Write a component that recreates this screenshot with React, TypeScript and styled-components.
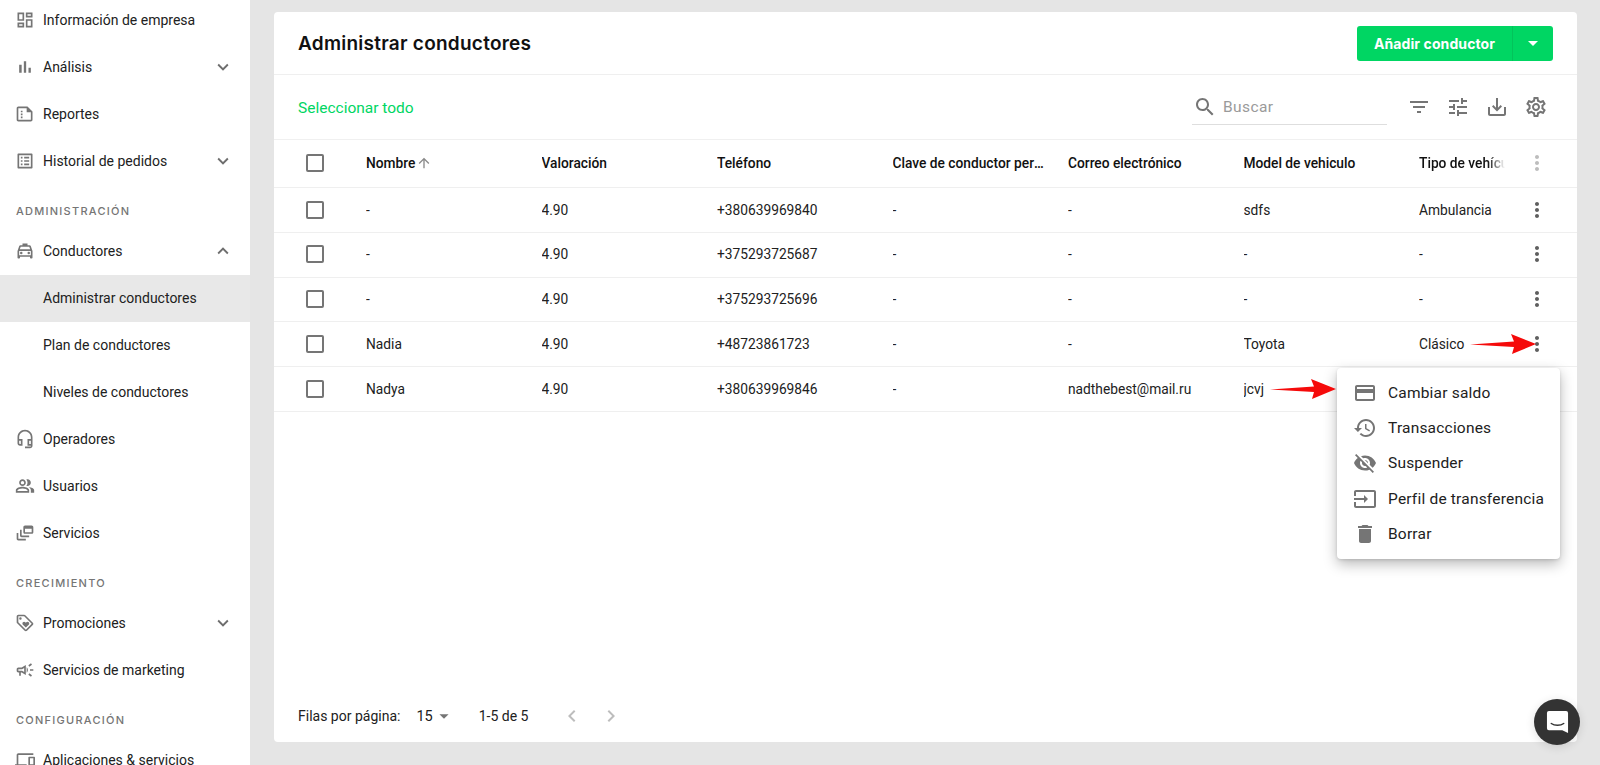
import React from "react";
import styled, { createGlobalStyle } from "styled-components";

const Global = createGlobalStyle`
  html, body { margin: 0; padding: 0; height: 100%; overflow: hidden; background: #e5e5e5; }
  body { font-family: Roboto, "Liberation Sans", sans-serif; color: #212121; -webkit-font-smoothing: antialiased; }
  * { box-sizing: border-box; }
`;

const P = {
  dashboard: "M19 5v2h-4V5h4M9 5v6H5V5h4m10 8v6h-4v-6h4M9 17v2H5v-2h4M21 3h-8v6h8V3zM11 3H3v10h8V3zm10 8h-8v10h8V11zM11 15H3v6h8v-6z",
  bar: "M5 9.2h3V19H5zM10.6 5h2.8v14h-2.8zm5.6 8H19v6h-2.8z",
  note: "M4 3h11l6 6v10c0 1.1-.9 2-2 2H4c-1.1 0-2-.9-2-2V5c0-1.1.9-2 2-2zm0 2v14h15v-9h-5V5H4zm3 3h2v2H7zm0 3.5h2v2H7zm0 3.5h2v2H7z",
  list: "M19 5v14H5V5h14m1.1-2H3.9c-.5 0-.9.4-.9.9v16.2c0 .4.4.9.9.9h16.2c.4 0 .9-.5.9-.9V3.9c0-.5-.5-.9-.9-.9zM11 7h6v2h-6V7zm0 4h6v2h-6v-2zm0 4h6v2h-6zM7 7h2v2H7zm0 4h2v2H7zm0 4h2v2H7z",
  taxi: "M18.92 6.01C18.72 5.42 18.16 5 17.5 5H15V3H9v2H6.5c-.66 0-1.21.42-1.42 1.01L3 12v8c0 .55.45 1 1 1h1c.55 0 1-.45 1-1v-1h12v1c0 .55.45 1 1 1h1c.55 0 1-.45 1-1v-8l-2.08-5.99zM6.85 7h10.29l1.04 3H5.81l1.04-3zM19 17H5v-5h14v5zM7.5 13a1.5 1.5 0 1 0 0 3 1.5 1.5 0 0 0 0-3zm9 0a1.5 1.5 0 1 0 0 3 1.5 1.5 0 0 0 0-3z",
  headset: "M12 1c-5 0-9 4-9 9v7c0 1.66 1.34 3 3 3h3v-8H5v-2c0-3.87 3.13-7 7-7s7 3.13 7 7v2h-4v8h4v1h-7v2h6c1.66 0 3-1.34 3-3V10c0-5-4-9-9-9zM7 14v4H6c-.55 0-1-.45-1-1v-3h2zm12 4h-2v-4h2v4z",
  people: "M16.67 13.13C18.04 14.06 19 15.32 19 17v3h4v-3c0-2.18-3.57-3.47-6.33-3.87zM15 12c2.21 0 4-1.79 4-4s-1.79-4-4-4c-.47 0-.91.1-1.33.24C14.5 5.27 15 6.58 15 8s-.5 2.73-1.33 3.76c.42.14.86.24 1.33.24zM9 12c2.21 0 4-1.79 4-4s-1.79-4-4-4-4 1.79-4 4 1.79 4 4 4zm0-6c1.1 0 2 .9 2 2s-.9 2-2 2-2-.9-2-2 .9-2 2-2zM9 13c-2.67 0-8 1.34-8 4v3h16v-3c0-2.66-5.33-4-8-4zm6 5H3v-.99C3.2 16.29 6.3 15 9 15s5.8 1.29 6 2v1z",
  feed: "M8 8H6v7c0 1.1.9 2 2 2h9v-2H8V8zM20 3h-8c-1.1 0-2 .9-2 2v6c0 1.1.9 2 2 2h8c1.1 0 2-.9 2-2V5c0-1.1-.9-2-2-2zm0 8h-8V7h8v4zM4 12H2v7c0 1.1.9 2 2 2h9v-2H4v-7z",
  tag: "M21.41 11.58l-9-9C12.05 2.22 11.55 2 11 2H4c-1.1 0-2 .9-2 2v7c0 .55.22 1.05.59 1.42l9 9c.36.36.86.58 1.41.58s1.05-.22 1.41-.59l7-7c.37-.36.59-.86.59-1.41s-.23-1.06-.59-1.42zM13 20.01L4 11V4h7v-.01l9 9-7 7.02zM6.5 5a1.5 1.5 0 1 0 0 3 1.5 1.5 0 0 0 0-3zM8.9 12.55c0 .57.23 1.07.6 1.45l3.5 3.5 3.5-3.5c.37-.37.6-.89.6-1.45 0-1.13-.92-2.05-2.05-2.05-.57 0-1.08.23-1.45.6l-.6.6-.6-.59c-.37-.38-.89-.61-1.45-.61-1.13 0-2.05.92-2.05 2.05z",
  campaign: "M18 11v2h4v-2h-4zm-2 6.61c.96.71 2.21 1.65 3.2 2.39.4-.53.8-1.07 1.2-1.6-.99-.74-2.24-1.68-3.2-2.4-.4.54-.8 1.08-1.2 1.61zM20.4 5.6c-.4-.53-.8-1.07-1.2-1.6-.99.74-2.24 1.68-3.2 2.4.4.53.8 1.07 1.2 1.6.96-.72 2.21-1.65 3.2-2.4zM4 9c-1.1 0-2 .9-2 2v2c0 1.1.9 2 2 2h1v4h2v-4h1l5 3V6L8 9H4zm5.03 1.71L11 9.53v4.94l-1.97-1.18-.48-.29H4v-2h4.55l.48-.29zM15.5 12c0-1.33-.58-2.53-1.5-3.35v6.69c.92-.81 1.5-2.01 1.5-3.34z",
  devices: "M4 6h18V4H4c-1.1 0-2 .9-2 2v11H0v3h14v-3H4V6zm19 2h-6c-.55 0-1 .45-1 1v10c0 .55.45 1 1 1h6c.55 0 1-.45 1-1V9c0-.55-.45-1-1-1zm-1 9h-4v-7h4v7z",
  search: "M15.5 14h-.79l-.28-.27C15.41 12.59 16 11.11 16 9.5 16 5.91 13.09 3 9.5 3S3 5.91 3 9.5 5.91 16 9.5 16c1.61 0 3.09-.59 4.23-1.57l.27.28v.79l5 4.99L20.49 19l-4.99-5zm-6 0C7.01 14 5 11.99 5 9.5S7.01 5 9.5 5 14 7.01 14 9.5 11.99 14 9.5 14z",
  filter: "M10 18h4v-2h-4v2zM3 6v2h18V6H3zm3 7h12v-2H6v2z",
  tune: "M3 17v2h6v-2H3zM3 5v2h10V5H3zm10 16v-2h8v-2h-8v-2h-2v6h2zM7 9v2H3v2h4v2h2V9H7zm14 4v-2H11v2h10zm-6-4h2V7h4V5h-4V3h-2v6z",
  save: "M19 12v7H5v-7H3v7c0 1.1.9 2 2 2h14c1.1 0 2-.9 2-2v-7h-2zm-6 .67l2.59-2.58L17 11.5l-5 5-5-5 1.41-1.41L11 12.67V3h2z",
  gear: "M19.43 12.98c.04-.32.07-.64.07-.98 0-.34-.03-.66-.07-.98l2.11-1.65c.19-.15.24-.42.12-.64l-2-3.46c-.09-.16-.26-.25-.44-.25-.06 0-.12.01-.17.03l-2.49 1c-.52-.4-1.08-.73-1.69-.98l-.38-2.65C14.46 2.18 14.25 2 14 2h-4c-.25 0-.46.18-.49.42l-.38 2.65c-.61.25-1.17.59-1.69.98l-2.49-1c-.06-.02-.12-.03-.18-.03-.17 0-.34.09-.43.25l-2 3.46c-.13.22-.07.49.12.64l2.11 1.65c-.04.32-.07.65-.07.98 0 .33.03.66.07.98l-2.11 1.65c-.19.15-.24.42-.12.64l2 3.46c.09.16.26.25.44.25.06 0 .12-.01.17-.03l2.49-1c.52.4 1.08.73 1.69.98l.38 2.65c.03.24.24.42.49.42h4c.25 0 .46-.18.49-.42l.38-2.65c.61-.25 1.17-.59 1.69-.98l2.49 1c.06.02.12.03.18.03.17 0 .34-.09.43-.25l2-3.46c.12-.22.07-.49-.12-.64l-2.11-1.65zm-1.98-1.71c.04.31.05.52.05.73 0 .21-.02.43-.05.73l-.14 1.13.89.7 1.08.84-.7 1.21-1.27-.51-1.04-.42-.9.68c-.43.32-.84.56-1.25.73l-1.06.43-.16 1.13-.2 1.35h-1.4l-.19-1.35-.16-1.13-1.06-.43c-.43-.18-.83-.41-1.23-.71l-.91-.7-1.06.43-1.27.51-.7-1.21 1.08-.84.89-.7-.14-1.13c-.03-.31-.05-.54-.05-.74s.02-.43.05-.73l.14-1.13-.89-.7-1.08-.84.7-1.21 1.27.51 1.04.42.9-.68c.43-.32.84-.56 1.25-.73l1.06-.43.16-1.13.2-1.35h1.39l.19 1.35.16 1.13 1.06.43c.43.18.83.41 1.23.71l.91.7 1.06-.43 1.27-.51.7 1.21-1.07.85-.89.7.14 1.13zM12 8c-2.21 0-4 1.79-4 4s1.79 4 4 4 4-1.79 4-4-1.79-4-4-4zm0 6c-1.1 0-2-.9-2-2s.9-2 2-2 2 .9 2 2-.9 2-2 2z",
  card: "M20 4H4c-1.11 0-1.99.89-1.99 2L2 18c0 1.11.89 2 2 2h16c1.11 0 2-.89 2-2V6c0-1.11-.89-2-2-2zm0 14H4v-6h16v6zm0-10H4V6h16v2z",
  history: "M13 3c-4.97 0-9 4.03-9 9H1l3.89 3.89.07.14L9 12H6c0-3.87 3.13-7 7-7s7 3.13 7 7-3.13 7-7 7c-1.93 0-3.68-.79-4.94-2.06l-1.42 1.42C8.27 19.99 10.51 21 13 21c4.97 0 9-4.03 9-9s-4.03-9-9-9zm-1 5v5l4.28 2.54.72-1.21-3.5-2.08V8H12z",
  eyeOff: "M12 7c2.76 0 5 2.24 5 5 0 .65-.13 1.26-.36 1.83l2.92 2.92c1.51-1.26 2.7-2.89 3.43-4.75-1.73-4.39-6-7.5-11-7.5-1.4 0-2.74.25-3.98.7l2.16 2.16C10.74 7.13 11.35 7 12 7zM2 4.27l2.28 2.28.46.46C3.08 8.3 1.78 10.02 1 12c1.73 4.39 6 7.5 11 7.5 1.55 0 3.03-.3 4.38-.84l.42.42L19.73 22 21 20.73 3.27 3 2 4.27zM7.53 9.8l1.55 1.55c-.05.21-.08.43-.08.65 0 1.66 1.34 3 3 3 .22 0 .44-.03.65-.08l1.55 1.55c-.67.33-1.41.53-2.2.53-2.76 0-5-2.24-5-5 0-.79.2-1.53.53-2.2zm4.31-.78l3.15 3.15.02-.16c0-1.66-1.34-3-3-3l-.17.01z",
  input: "M21 3.01H3c-1.1 0-2 .9-2 2V9h2V4.99h18v14.03H3V15H1v4.01c0 1.1.9 1.98 2 1.98h18c1.1 0 2-.88 2-1.98v-14c0-1.11-.9-2-2-2zM11 16l4-4-4-4v3H1v2h10v3z",
  trash: "M6 19c0 1.1.9 2 2 2h8c1.1 0 2-.9 2-2V7H6v12zM19 4h-3.5l-1-1h-5l-1 1H5v2h14V4z",
  more: "M12 8c1.1 0 2-.9 2-2s-.9-2-2-2-2 .9-2 2 .9 2 2 2zm0 2c-1.1 0-2 .9-2 2s.9 2 2 2 2-.9 2-2-.9-2-2-2zm0 6c-1.1 0-2 .9-2 2s.9 2 2 2 2-.9 2-2-.9-2-2-2z",
  down: "M16.59 8.59L12 13.17 7.41 8.59 6 10l6 6 6-6z",
  up: "M12 8l-6 6 1.41 1.41L12 10.83l4.59 4.58L18 14z",
  drop: "M7 10l5 5 5-5z",
  arrowUp: "M4 12l1.41 1.41L11 7.83V20h2V7.83l5.58 5.59L20 12l-8-8-8 8z",
  left: "M15.41 7.41L14 6l-6 6 6 6 1.41-1.41L10.83 12z",
  right: "M10 6L8.59 7.41 13.17 12l-4.58 4.59L10 18l6-6z",
};

const Svg = styled.svg<{ $size: number; $color: string }>`
  width: ${(p) => p.$size}px;
  height: ${(p) => p.$size}px;
  flex: none;
  fill: ${(p) => p.$color};
  display: block;
`;

const Icon = ({ d, size = 24, color = "#757575" }: { d: string; size?: number; color?: string }) => (
  <Svg $size={size} $color={color} viewBox="0 0 24 24"><path d={d} fillRule="evenodd" /></Svg>
);

const Page = styled.div`
  display: flex;
  width: 1600px;
  height: 765px;
  overflow: hidden;
  position: relative;
`;

const Sidebar = styled.aside`
  width: 250px;
  flex: none;
  height: 765px;
  background: #fff;
  overflow: hidden;
`;

const Nav = styled.nav`
  margin-top: -3.5px;
`;

const NavRow = styled.div<{ $active?: boolean }>`
  height: 47px;
  display: flex;
  align-items: center;
  padding: 0 16px;
  font-size: 14px;
  color: #212121;
  background: ${(p) => (p.$active ? "#e8e8e8" : "transparent")};
`;

const NavIconSlot = styled.span`
  width: 28px;
  margin-left: -1px;
  flex: none;
  display: flex;
  align-items: center;
`;

const NavIndent = styled.span`
  width: 27px;
  flex: none;
`;

const NavText = styled.span`
  flex: 1;
  white-space: nowrap;
`;

const SectionLabel = styled.div`
  height: 43px;
  padding: 19px 16px 0;
  font-family: Inter, Roboto, sans-serif;
  font-size: 11px;
  line-height: 15px;
  font-weight: 500;
  letter-spacing: 1.25px;
  color: #757575;
  white-space: nowrap;
`;

const Main = styled.main`
  flex: 1;
  padding: 12px 23px 23px 24px;
  display: flex;
`;

const Card = styled.section`
  flex: 1;
  position: relative;
  background: #fff;
  border-radius: 4px;
  display: flex;
  flex-direction: column;
`;

const Header = styled.header`
  height: 63px;
  flex: none;
  display: flex;
  align-items: center;
  justify-content: space-between;
  padding: 0 24px;
  border-bottom: 1px solid #efefef;
`;

const Title = styled.h1`
  margin: 0;
  font-family: Inter, Roboto, sans-serif;
  font-size: 19px;
  font-weight: 600;
  letter-spacing: 0.25px;
  color: #111;
`;

const SplitButton = styled.div`
  width: 196px;
  height: 35px;
  display: flex;
  background: #00d663;
  border-radius: 3px;
  color: #fff;
`;

const ButtonMain = styled.div`
  width: 156px;
  display: flex;
  align-items: center;
  justify-content: center;
  font-family: Inter, Roboto, sans-serif;
  font-size: 14px;
  font-weight: 700;
  letter-spacing: 0.1px;
  border-right: 1px solid #03c35b;
`;

const ButtonDrop = styled.div`
  flex: 1;
  display: flex;
  align-items: center;
  justify-content: center;
`;

const Toolbar = styled.div`
  height: 65px;
  flex: none;
  display: flex;
  align-items: center;
  padding: 0 24px;
  border-bottom: 1px solid #f0f0f0;
`;

const SelectAll = styled.span`
  font-size: 15.5px;
  padding-top: 1px;
  color: #00d663;
  flex: 1;
`;

const Search = styled.div`
  width: 195px;
  height: 33px;
  margin-right: 20px;
  margin-top: 2px;
  padding: 0 0 2px 1px;
  display: flex;
  align-items: center;
  gap: 6px;
  border-bottom: 1px solid #dedede;
  font-size: 15.5px;
  letter-spacing: 0.4px;
  color: #9a9a9a;
`;

const ToolIcons = styled.div`
  display: flex;
  gap: 15px;
  margin-right: 5px;
`;

const GridRow = styled.div<{ $head?: boolean }>`
  display: grid;
  grid-template-columns: 92px repeat(6, 175.5px) 86px 1fr;
  align-items: center;
  height: ${(p) => (p.$head ? "48px" : "44.8px")};
  padding-bottom: ${(p) => (p.$head ? "1px" : "0.5px")};
  flex: none;
  border-bottom: 1px solid #efefef;
  font-size: 13.75px;
  color: ${(p) => (p.$head ? "#111" : "#212121")};
  font-weight: ${(p) => (p.$head ? 500 : 400)};
`;

const Check = styled.span`
  display: block;
  width: 18px;
  height: 18px;
  margin-left: 32px;
  border: 2px solid #757575;
  border-radius: 2px;
`;

const Cell = styled.div<{ $last?: boolean }>`
  min-width: 0;
  padding-right: ${(p) => (p.$last ? "0" : "22px")};
  white-space: nowrap;
  overflow: hidden;
  text-overflow: ellipsis;
`;

const SortCell = styled(Cell)`
  display: flex;
  align-items: center;
  gap: 1px;
`;

const FadeText = styled.div`
  overflow: hidden;
  white-space: nowrap;
  -webkit-mask-image: linear-gradient(90deg, #000 80%, transparent);
  mask-image: linear-gradient(90deg, #000 80%, transparent);
`;

const Kebab = styled.div`
  display: flex;
  justify-content: flex-end;
  padding-right: 28px;
`;

const Footer = styled.footer`
  margin-top: auto;
  height: 52px;
  flex: none;
  display: flex;
  align-items: center;
  padding: 0 24px 0;
  font-size: 14px;
  color: #212121;
`;

const Rows = styled.span`
  display: flex;
  align-items: center;
  margin-left: 16px;
  font-size: 14.5px;
`;

const Range = styled.span`
  margin-left: 24px;
`;

const Pager = styled.div`
  margin-left: 32px;
  display: flex;
  gap: 15px;
`;

const Menu = styled.div`
  position: absolute;
  left: 1063px;
  top: 356px;
  width: 223px;
  height: 191px;
  padding: 7px 0;
  background: #fff;
  border-radius: 4px;
  box-shadow: 0 5px 14px rgba(0, 0, 0, 0.28), 0 1px 3px rgba(0, 0, 0, 0.12);
  z-index: 3;
`;

const MenuItem = styled.div`
  height: 35.3px;
  display: flex;
  align-items: center;
  gap: 11px;
  padding-left: 16px;
  font-size: 15.5px;
  letter-spacing: 0.2px;
  color: #212121;
  white-space: nowrap;
`;

const Arrow = styled.svg<{ $x: number; $y: number }>`
  position: absolute;
  left: ${(p) => p.$x}px;
  top: ${(p) => p.$y}px;
  width: 66px;
  height: 24px;
  z-index: 4;
`;

const Chat = styled.div`
  position: absolute;
  left: 1534px;
  top: 699px;
  width: 46px;
  height: 46px;
  border-radius: 50%;
  background: #333;
  display: flex;
  align-items: center;
  justify-content: center;
  box-shadow: 0 2px 10px rgba(0, 0, 0, 0.12);
  z-index: 5;
`;

type NavEntry = { label?: string; icon?: string; text?: string; chevron?: "up" | "down"; active?: boolean; sub?: boolean };

const nav: NavEntry[] = [
  { icon: P.dashboard, text: "Información de empresa" },
  { icon: P.bar, text: "Análisis", chevron: "down" },
  { icon: P.note, text: "Reportes" },
  { icon: P.list, text: "Historial de pedidos", chevron: "down" },
  { label: "ADMINISTRACIÓN" },
  { icon: P.taxi, text: "Conductores", chevron: "up" },
  { text: "Administrar conductores", sub: true, active: true },
  { text: "Plan de conductores", sub: true },
  { text: "Niveles de conductores", sub: true },
  { icon: P.headset, text: "Operadores" },
  { icon: P.people, text: "Usuarios" },
  { icon: P.feed, text: "Servicios" },
  { label: "CRECIMIENTO" },
  { icon: P.tag, text: "Promociones", chevron: "down" },
  { icon: P.campaign, text: "Servicios de marketing" },
  { label: "CONFIGURACIÓN" },
  { icon: P.devices, text: "Aplicaciones & servicios" },
];

const rows = [
  ["-", "4.90", "+380639969840", "-", "-", "sdfs", "Ambulancia"],
  ["-", "4.90", "+375293725687", "-", "-", "-", "-"],
  ["-", "4.90", "+375293725696", "-", "-", "-", "-"],
  ["Nadia", "4.90", "+48723861723", "-", "-", "Toyota", "Clásico"],
  ["Nadya", "4.90", "+380639969846", "-", "nadthebest@mail.ru", "jcvj", ""],
];

const menu = [
  [P.card, "Cambiar saldo"],
  [P.history, "Transacciones"],
  [P.eyeOff, "Suspender"],
  [P.input, "Perfil de transferencia"],
  [P.trash, "Borrar"],
];

const ArrowShape = () => (
  <path d="M0 12.5 L44 9.5 L41 2 L66 12 L42 22 L44 15 Z" fill="#f50a0a" />
);

export default function App() {
  return (
    <Page>
      <Global />
      <Sidebar>
        <Nav>
          {nav.map((n, i) =>
            n.label ? (
              <SectionLabel key={i}>{n.label}</SectionLabel>
            ) : (
              <NavRow key={i} $active={n.active}>
                {n.icon ? (
                  <NavIconSlot><Icon d={n.icon} size={20} /></NavIconSlot>
                ) : (
                  <NavIndent />
                )}
                <NavText>{n.text}</NavText>
                {n.chevron && <Icon d={n.chevron === "up" ? P.up : P.down} size={22} color="#6e6e6e" />}
              </NavRow>
            )
          )}
        </Nav>
      </Sidebar>
      <Main>
        <Card>
          <Header>
            <Title>Administrar conductores</Title>
            <SplitButton>
              <ButtonMain>Añadir conductor</ButtonMain>
              <ButtonDrop><Icon d={P.drop} color="#fff" /></ButtonDrop>
            </SplitButton>
          </Header>
          <Toolbar>
            <SelectAll>Seleccionar todo</SelectAll>
            <Search>
              <Icon d={P.search} />
              Buscar
            </Search>
            <ToolIcons>
              <Icon d={P.filter} />
              <Icon d={P.tune} />
              <Icon d={P.save} />
              <Icon d={P.gear} />
            </ToolIcons>
          </Toolbar>
          <GridRow $head>
            <Check />
            <SortCell>Nombre <Icon d={P.arrowUp} size={16} color="#8a8a8a" /></SortCell>
            <Cell>Valoración</Cell>
            <Cell>Teléfono</Cell>
            <Cell>Clave de conductor personal</Cell>
            <Cell>Correo electrónico</Cell>
            <Cell>Model de vehiculo</Cell>
            <FadeText>Tipo de vehículo</FadeText>
            <Kebab><Icon d={P.more} color="#bdbdbd" /></Kebab>
          </GridRow>
          {rows.map((r, i) => (
            <GridRow key={i}>
              <Check />
              {r.map((c, j) => <Cell key={j} $last={j === 6}>{c}</Cell>)}
              {i < 4 ? <Kebab><Icon d={P.more} color="#5f5f5f" /></Kebab> : <span />}
            </GridRow>
          ))}
          <Footer>
            Filas por página:
            <Rows>15 <Icon d={P.drop} size={22} /></Rows>
            <Range>1-5 de 5</Range>
            <Pager>
              <Icon d={P.left} color="#bdbdbd" />
              <Icon d={P.right} color="#bdbdbd" />
            </Pager>
          </Footer>
          <Menu>
            {menu.map(([d, t]) => (
              <MenuItem key={t}><Icon d={d} />{t}</MenuItem>
            ))}
          </Menu>
          <Arrow $x={1196} $y={320} viewBox="0 0 66 24"><ArrowShape /></Arrow>
          <Arrow $x={996} $y={365} viewBox="0 0 66 24"><ArrowShape /></Arrow>
        </Card>
      </Main>
      <Chat>
        <svg width="23" height="25" viewBox="0 0 24 26">
          <path d="M3 1h18a2 2 0 0 1 2 2v21l-6-3H3a2 2 0 0 1-2-2V3a2 2 0 0 1 2-2z" fill="#fff" />
          <path d="M5.5 14c3.5 2.6 9.5 2.6 13 0" stroke="#333" strokeWidth="1.5" fill="none" strokeLinecap="round" />
        </svg>
      </Chat>
    </Page>
  );
}
